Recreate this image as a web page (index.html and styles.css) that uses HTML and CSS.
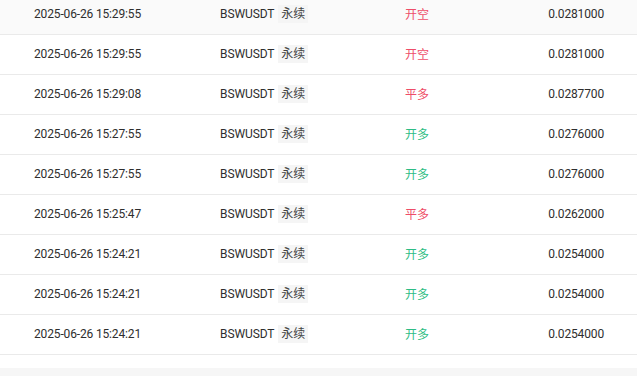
FILE: index.html
```html
<!DOCTYPE html>
<html lang="zh">
<head>
<meta charset="utf-8">
<link rel="stylesheet" href="styles.css">
</head>
<body>
<div class="page">
  <div class="table">
    <div class="row hover"><span class="c-date">2025-06-26 15:29:55</span><span class="c-sym">BSWUSDT<span class="tag">永续</span></span><span class="c-side red">开空</span><span class="c-price">0.0281000</span></div>
    <div class="row"><span class="c-date">2025-06-26 15:29:55</span><span class="c-sym">BSWUSDT<span class="tag">永续</span></span><span class="c-side red">开空</span><span class="c-price">0.0281000</span></div>
    <div class="row"><span class="c-date">2025-06-26 15:29:08</span><span class="c-sym">BSWUSDT<span class="tag">永续</span></span><span class="c-side red">平多</span><span class="c-price">0.0287700</span></div>
    <div class="row"><span class="c-date">2025-06-26 15:27:55</span><span class="c-sym">BSWUSDT<span class="tag">永续</span></span><span class="c-side green">开多</span><span class="c-price">0.0276000</span></div>
    <div class="row"><span class="c-date">2025-06-26 15:27:55</span><span class="c-sym">BSWUSDT<span class="tag">永续</span></span><span class="c-side green">开多</span><span class="c-price">0.0276000</span></div>
    <div class="row"><span class="c-date">2025-06-26 15:25:47</span><span class="c-sym">BSWUSDT<span class="tag">永续</span></span><span class="c-side red">平多</span><span class="c-price">0.0262000</span></div>
    <div class="row"><span class="c-date">2025-06-26 15:24:21</span><span class="c-sym">BSWUSDT<span class="tag">永续</span></span><span class="c-side green">开多</span><span class="c-price">0.0254000</span></div>
    <div class="row"><span class="c-date">2025-06-26 15:24:21</span><span class="c-sym">BSWUSDT<span class="tag">永续</span></span><span class="c-side green">开多</span><span class="c-price">0.0254000</span></div>
    <div class="row"><span class="c-date">2025-06-26 15:24:21</span><span class="c-sym">BSWUSDT<span class="tag">永续</span></span><span class="c-side green">开多</span><span class="c-price">0.0254000</span></div>
  </div>
  <div class="footer-space"></div>
  <div class="footer-band"></div>
</div>
</body>
</html>
```

FILE: styles.css
```css
html, body {
  margin: 0;
  padding: 0;
  background: #fff;
}
body {
  font-family: Roboto, "Noto Sans CJK SC", sans-serif;
  font-size: 12px;
  color: #2e2e2e;
  overflow: hidden;
}
.page {
  margin-top: -5px;
}
.table {
  display: flex;
  flex-direction: column;
}
.row {
  display: grid;
  grid-template-columns: 186px 185px 1fr 120px;
  align-items: center;
  height: 37px;
  padding: 0 33px 2px 34px;
  border-bottom: 1px solid #eaeaea;
}
.row.hover {
  background: #fafafa;
}
.c-date,
.c-price {
  letter-spacing: -0.15px;
}
.c-sym {
  display: flex;
  align-items: center;
  letter-spacing: -0.1px;
}
.tag {
  margin-left: 4px;
  padding: 1px 3px;
  background: #f5f5f5;
  line-height: 16px;
  color: #444;
  letter-spacing: 0;
}
.c-price {
  text-align: right;
}
.red {
  color: #ee4d68;
}
.green {
  color: #2ebd85;
}
.footer-space {
  height: 13px;
}
.footer-band {
  height: 20px;
  background: #f6f6f6;
}
```
